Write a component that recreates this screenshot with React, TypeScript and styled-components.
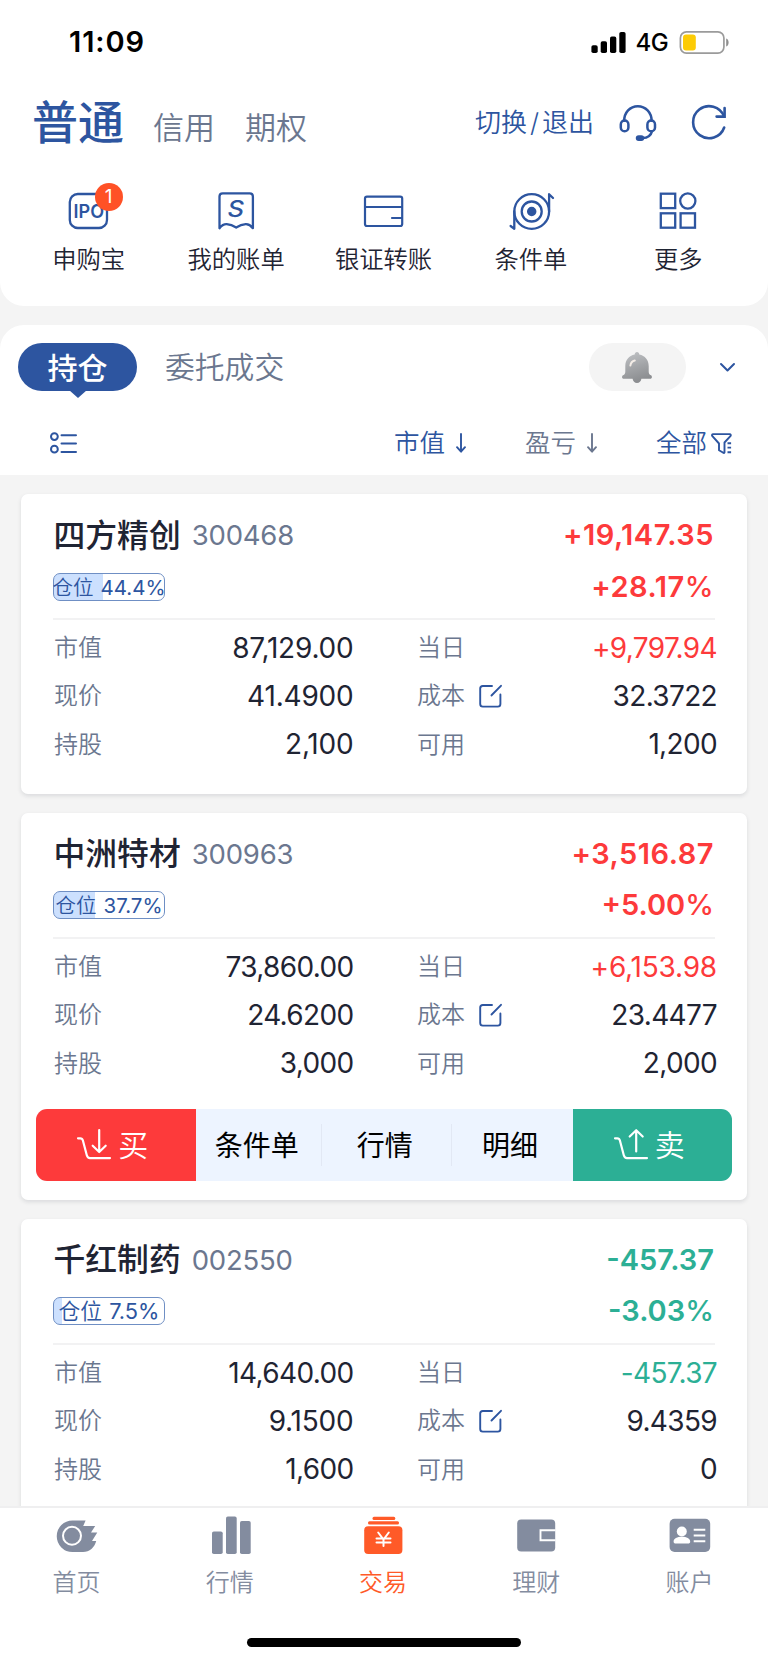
import React from 'react';
import styled, { createGlobalStyle } from 'styled-components';

const c = {
  blue: '#2d55a0',
  gray: '#6b778f',
  ink: '#1f2433',
  red: '#fd3a3b',
  green: '#2caf95',
  orange: '#ff5a28',
  tab: '#838c9f',
  page: '#f4f4f4',
};

const GlobalStyle = createGlobalStyle`
  * { box-sizing: border-box; }
  body { margin: 0; background: ${c.page}; }
`;

const Screen = styled.div`
  width: 768px;
  height: 1663px;
  overflow: hidden;
  display: flex;
  flex-direction: column;
  background: ${c.page};
  color: ${c.ink};
  font-family: Inter, 'Noto Sans CJK SC', sans-serif;
  white-space: nowrap;

  svg { display: block; flex: none; overflow: visible; }
`;

/* ---------- header ---------- */

const Header = styled.header`
  flex: none;
  height: 306px;
  background: #fff;
  border-radius: 0 0 24px 24px;
`;

const StatusBar = styled.div`
  height: 84px;
  padding: 0 39px 0 69px;
  display: flex;
  align-items: center;
  color: #000;
`;

const Clock = styled.span`
  font-size: 29px;
  font-weight: 600;
  line-height: 40px;
  letter-spacing: 0.9px;
  margin: 0 auto 0 0;
`;

const Network = styled.span`
  font-size: 24px;
  font-weight: 500;
  line-height: 40px;
  letter-spacing: -0.6px;
  margin: 2px 12px 0 10px;
`;

const TopRow = styled.div`
  height: 76px;
  padding: 0 41px 0 32px;
  display: flex;
  align-items: center;
`;

const Accounts = styled.nav`
  display: flex;
  align-items: baseline;
  line-height: 60px;
  padding-top: 6px;
  margin-right: auto;
`;

const Account = styled.span<{ $active?: boolean }>`
  font-size: ${(p) => (p.$active ? 46 : 31)}px;
  font-weight: ${(p) => (p.$active ? 500 : 350)};
  color: ${(p) => (p.$active ? c.blue : c.gray)};
  margin-right: ${(p) => (p.$active ? 29 : 30)}px;
`;

const SwitchLink = styled.span`
  font-size: 26px;
  font-weight: 350;
  line-height: 40px;
  color: ${c.blue};
  padding-top: 2px;
  margin-right: 24px;

  i { font-style: normal; margin: 0 3px; }
`;

const HeadsetSlot = styled.span`
  margin-right: 33px;
`;

const QuickGrid = styled.div`
  display: flex;
  padding: 29px 16px 0 15px;
`;

const QuickItem = styled.div`
  flex: 1;
  display: flex;
  flex-direction: column;
  align-items: center;
`;

const QuickIcon = styled.div`
  position: relative;
  width: 44px;
  height: 44px;
`;

const Badge = styled.span`
  position: absolute;
  left: 28px;
  top: -6px;
  width: 28px;
  height: 28px;
  border-radius: 50%;
  background: #ff5126;
  color: #fff;
  font-size: 19px;
  line-height: 28px;
  text-align: center;
`;

const QuickLabel = styled.span`
  margin-top: 8.5px;
  font-size: 24.3px;
  font-weight: 350;
  line-height: 34px;
`;

/* ---------- holdings panel ---------- */

const Panel = styled.section`
  flex: none;
  height: 150px;
  margin-top: 19px;
  padding-top: 18px;
  background: #fff;
  border-radius: 24px 24px 0 0;
`;

const ViewTabs = styled.div`
  display: flex;
  align-items: center;
  height: 48px;
  padding: 0 33px 0 18px;
`;

const ActivePill = styled.span`
  position: relative;
  width: 119px;
  height: 48px;
  border-radius: 24px;
  background: ${c.blue};
  color: #fff;
  font-size: 30px;
  font-weight: 500;
  line-height: 50px;
  text-align: center;

  &::after {
    content: '';
    position: absolute;
    left: 51px;
    top: 47px;
    border: 9px solid transparent;
    border-top: 8.5px solid ${c.blue};
    border-bottom: 0;
  }
`;

const ViewTab = styled.span`
  margin: 0 auto 0 28px;
  padding-top: 1px;
  font-size: 29.8px;
  font-weight: 350;
  line-height: 49px;
  color: ${c.gray};
`;

const BellPill = styled.span`
  width: 97px;
  height: 48px;
  margin-right: 34px;
  padding-right: 1px;
  border-radius: 24px;
  background: ${c.page};
  display: flex;
  align-items: center;
  justify-content: center;
`;

const FilterRow = styled.div`
  display: flex;
  align-items: center;
  height: 66px;
  margin-top: 19px;
  padding: 0 36px 0 50px;
`;

const Filter = styled.span<{ $muted?: boolean; $before: string; $gap: number }>`
  display: flex;
  align-items: center;
  gap: ${(p) => p.$gap}px;
  margin-left: ${(p) => p.$before};
  font-size: 25.5px;
  font-weight: 350;
  line-height: 40px;
  color: ${(p) => (p.$muted ? c.gray : c.blue)};
`;

/* ---------- stock cards ---------- */

const CardList = styled.main`
  flex: 1;
  min-height: 0;
  overflow: hidden;
  padding: 19px 21px 0;
  display: flex;
  flex-direction: column;
  gap: 19px;
`;

const Card = styled.article`
  flex: none;
  background: #fff;
  border-radius: 7px;
  padding: 15px 0 19px;
  box-shadow: 0 2px 4px rgba(30, 40, 60, 0.12);
`;

const CardHead = styled.div`
  display: grid;
  grid-template-columns: 1fr auto;
  grid-template-rows: 52px 51px;
  align-items: center;
  margin: 0 32px 6px;
  padding-right: 1px;
`;

const Title = styled.div`
  display: flex;
  align-items: center;
  gap: 11px;
  padding-left: 0.5px;
`;

const Name = styled.span`
  padding-top: 1px;
  font-size: 31.8px;
  font-weight: 500;
  line-height: 44px;
`;

const Code = styled.span`
  font-size: 27.5px;
  line-height: 44px;
  color: ${c.gray};
  letter-spacing: -0.2px;
`;

const hasInnerOne = (s: string) => /\d[.,]?1/.test(s);

const Gain = styled.span<{ $up: boolean; $wide: boolean }>`
  justify-self: end;
  font-size: 29px;
  font-weight: 600;
  letter-spacing: ${(p) => (p.$wide ? 0.5 : 0)}px;
  line-height: 44px;
  color: ${(p) => (p.$up ? c.red : c.green)};

  small { font-size: inherit; font-weight: 500; }
`;

const Weight = styled.span<{ $share: number }>`
  width: 112px;
  height: 28px;
  border: 1px solid #6f8fc4;
  border-radius: 7px;
  background: linear-gradient(90deg, #cce0fe ${(p) => p.$share}%, #fff ${(p) => p.$share}%);
  color: ${c.blue};
  font-size: ${(p) => (p.$share < 10 ? 21.8 : 20.5)}px;
  font-weight: 350;
  line-height: 27px;
  display: flex;
  justify-content: center;
  gap: 7px;

  b { font-weight: 400; }
`;

const Rule = styled.div`
  height: 2px;
  margin: 0 32px 3.5px;
  background: #f2f2f3;
`;

const Facts = styled.dl`
  display: grid;
  grid-template-columns: 299.5px 300px;
  grid-auto-rows: 48.3px;
  column-gap: 63.5px;
  margin: 0 30px 6.6px 33px;
`;

const Fact = styled.div`
  display: flex;
  align-items: center;
  line-height: 40px;
`;

const Label = styled.dt`
  padding-top: 1px;
  font-size: 24px;
  font-weight: 350;
  color: ${c.gray};
  margin-right: 13.5px;
`;

const Figure = styled.dd<{ $color?: string; $wide: boolean }>`
  margin: 0 0 0 auto;
  font-size: 28px;
  letter-spacing: ${(p) => (p.$wide ? -0.2 : -0.65)}px;
  color: ${(p) => p.$color || c.ink};
`;

const Actions = styled.div`
  display: flex;
  height: 72px;
  margin: 21.5px 15px 0;
  border-radius: 11px;
  overflow: hidden;
  background: #edf4ff;
  color: #000;
`;

const Trade = styled.span<{ $buy?: boolean }>`
  width: 159.5px;
  display: flex;
  align-items: center;
  justify-content: center;
  gap: 7px;
  padding-right: 6px;
  background: ${(p) => (p.$buy ? c.red : c.green)};
  color: #fff;
  font-size: 30px;
  font-weight: 350;
  line-height: 74px;
`;

const Links = styled.div`
  flex: 1;
  display: flex;
  align-items: center;
`;

const ActionLink = styled.span<{ $w: number }>`
  width: ${(p) => p.$w}px;
  height: 42px;
  padding-right: 3px;
  line-height: 44px;
  font-size: 28px;
  font-weight: 400;
  text-align: center;

  & + & { border-left: 1.5px solid #e2e8f4; }
`;

/* ---------- bottom bar ---------- */

const TabBar = styled.footer`
  flex: none;
  height: 157px;
  background: #fff;
  border-top: 2px solid #efeff0;
`;

const TabItems = styled.nav`
  display: flex;
  width: 766px;
`;

const TabItem = styled.span<{ $active?: boolean }>`
  flex: 1;
  display: flex;
  flex-direction: column;
  align-items: center;
  gap: 10px;
  padding-top: 2px;
  font-size: 24px;
  font-weight: 350;
  line-height: 34px;
  color: ${(p) => (p.$active ? c.orange : c.tab)};
`;

const HomeIndicator = styled.div`
  width: 274px;
  height: 9px;
  margin: 38px auto 0;
  border-radius: 5px;
  background: #000;
`;

/* ---------- icons ---------- */

const stroke = { fill: 'none', stroke: 'currentColor', strokeLinecap: 'round', strokeLinejoin: 'round' } as const;

const Signal = () => (
  <svg width="35" height="21" viewBox="0 0 35 21">
    <rect x="0.4" y="13.3" width="6.3" height="7.7" rx="1.8" />
    <rect x="9.7" y="9.3" width="6.3" height="11.7" rx="1.8" />
    <rect x="19" y="4.6" width="6.3" height="16.4" rx="1.8" />
    <rect x="28.3" y="0" width="6.3" height="21" rx="1.8" />
  </svg>
);

const Battery = () => (
  <svg width="49" height="23" viewBox="0 0 49 23">
    <rect x="0.4" y="0.9" width="43.5" height="21.2" rx="6" fill="none" stroke="#9b9b9b" strokeWidth="1.7" />
    <rect x="3" y="3.6" width="12.8" height="15.8" rx="3" fill="#fccb05" />
    <path d="M46.2 7.5c3.2 1 3.2 7 0 8z" fill="#8f8f8f" />
  </svg>
);

const Headset = () => (
  <svg width="40" height="40" viewBox="0 0 40 40" color={c.blue} {...stroke} strokeWidth="2.5">
    <path d="M6.2 18.8C6.2 10.5 12 4.200 19.8 4.200s13.8 6.300 13.8 14.600" />
    <rect x="2.8" y="18.6" width="7.6" height="10.6" rx="3.8" />
    <rect x="29.4" y="18.6" width="7.6" height="10.6" rx="3.8" />
    <path d="M34 29.2c-1 4.2-5 6.6-9.5 6.900" />
    <rect x="19" y="34.4" width="6" height="3.4" rx="1.7" fill="currentColor" />
  </svg>
);

const Refresh = () => (
  <svg width="36" height="36" viewBox="0 0 36 36" color={c.blue} {...stroke} strokeWidth="2.6">
    <path d="M33 12.3A16 16 0 1 0 33.2 23.5" />
    <path d="M33.6 4v8.6h-8" strokeLinejoin="miter" />
  </svg>
);

const IpoIcon = () => (
  <svg width="44" height="44" viewBox="0 0 44 44" color={c.blue}>
    <rect x="2.8" y="5" width="37.2" height="34" rx="8" {...stroke} strokeWidth="2.3" />
    <text x="6.6" y="29" fontSize="19" fontWeight="600" fill="currentColor" textLength="30.5" lengthAdjust="spacingAndGlyphs">IPO</text>
  </svg>
);

const BillIcon = () => (
  <svg width="44" height="44" viewBox="0 0 44 44" color={c.blue}>
    <path d="M5.5 39.2V7.6Q5.5 4.4 8.7 4.4H35.7Q38.9 4.4 38.9 7.6V39.2Q35.6 35 31.7 35.2Q27 35.6 22.2 38.6Q17.4 35.6 12.7 35.2Q8.8 35 5.5 39.2Z" {...stroke} strokeWidth="2.3" />
    <text x="13.6" y="28.4" fontSize="22.5" fontWeight="500" fontStyle="italic" fill="currentColor" textLength="16.5" lengthAdjust="spacingAndGlyphs">S</text>
  </svg>
);

const TransferIcon = () => (
  <svg width="44" height="44" viewBox="0 0 44 44" color={c.blue} {...stroke} strokeWidth="2.2">
    <rect x="3" y="7.6" width="37.2" height="29.4" rx="2" />
    <path d="M3 18H40M30 29h10" />
  </svg>
);

const TargetIcon = () => (
  <svg width="44" height="44" viewBox="0 0 44 44" color={c.blue} {...stroke} strokeWidth="2.3">
    <circle cx="22.7" cy="22.5" r="17.4" />
    <circle cx="22.7" cy="22.5" r="10" />
    <circle cx="22.7" cy="22.5" r="3.6" fill="currentColor" />
    <path d="M40.1 22.5V5.2L44 9M5.3 22.5V39.8L1.6 37" />
  </svg>
);

const MoreIcon = () => (
  <svg width="44" height="44" viewBox="0 0 44 44" color={c.blue} {...stroke} strokeWidth="2.3" strokeLinejoin="miter">
    <rect x="4.8" y="4.7" width="14.4" height="14.4" />
    <circle cx="31.8" cy="12" r="7.6" />
    <rect x="4.8" y="24.3" width="14.4" height="14.4" />
    <rect x="24.6" y="24.3" width="14.4" height="14.4" />
  </svg>
);

const Bell = () => (
  <svg width="30" height="31" viewBox="0 0 30 31">
    <defs>
      <linearGradient id="bellBody" x1="0" y1="0" x2="0.3" y2="1">
        <stop offset="0" stopColor="#c3c5c8" />
        <stop offset="0.55" stopColor="#a3a5a8" />
        <stop offset="1" stopColor="#8c8e91" />
      </linearGradient>
    </defs>
    <path
      d="M15 0c1.400 0 2.200 1 2.300 2.500C23 3.600 26.700 8 26.700 14v5.500c0 2 .7 3.100 1.600 3.400 2.300.6 2.100 3.800-.1 3.800H19.400C19 29.200 17.500 31 15 31s-4-1.800-4.400-4.300H1.800c-2.200 0-2.400-3.200-.1-3.800.9-.3 1.600-1.400 1.600-3.400V14C3.300 8 7 3.600 12.700 2.500 12.800 1 13.600 0 15 0z"
      fill="url(#bellBody)"
    />
    <path d="M8.400 13.500c.3-2.400 2-4.300 4.400-5" fill="none" stroke="#f3ece6" strokeWidth="2" strokeLinecap="round" />
  </svg>
);

const Chevron = () => (
  <svg width="15" height="9" viewBox="0 0 15 9" color={c.blue} {...stroke} strokeWidth="2">
    <path d="M1 1l6.500 6.500L14 1" />
  </svg>
);

const ListIcon = () => (
  <svg width="27" height="22" viewBox="0 0 27 22" color={c.blue} {...stroke} strokeWidth="2">
    <circle cx="4.400" cy="4.600" r="3.400" />
    <circle cx="4.400" cy="17.200" r="3.400" />
    <path d="M11.500 3.200H26M11.500 11.600H26M11.500 20H26" />
  </svg>
);

const DownArrow = () => (
  <svg width="10" height="20" viewBox="0 0 10 20" {...stroke} strokeWidth="1.900">
    <path d="M5 1v17.500M1 14.200l4 4.500 4-4.500" />
  </svg>
);

const Funnel = () => (
  <svg width="21" height="21" viewBox="0 0 21 21" {...stroke} strokeWidth="1.900">
    <path d="M13.500 19.500c-.2.500-.8.600-1.200.3L8 17.200V10.500L1.400 3.200C.6 2.100 1 1.100 2.200 1.100H18.600c1.200 0 1.600 1 .8 2.100L13.500 9.500z" />
    <path d="M16.500 10.200h3.600M16.500 14.600h3.600M16.500 19.200h3.600" strokeLinecap="butt" />
  </svg>
);

const EditIcon = () => (
  <svg width="23" height="24" viewBox="0 0 23 24" color={c.blue} {...stroke} strokeWidth="1.900">
    <path d="M13 2H3.800Q1.200 2 1.200 4.600V20Q1.200 22.600 3.800 22.600H18.800Q21.400 22.600 21.400 20V10.500" />
    <path d="M12.500 11.500L22 1.800" />
  </svg>
);

const TradeIcon = ({ up }: { up?: boolean }) => (
  <svg width="34" height="31" viewBox="0 0 34 31" {...stroke} strokeWidth="2.200">
    <path d="M1 9.300h2.300q2 0 2.600 2.200l3.900 14.800q.8 2.800 3.200 2.800H33" />
    <path d={up ? 'M22.200 22.500V1.500M15.700 7.500l6.500-6.300 6.500 6.300' : 'M22.200 1V22.500M15.700 16.700l6.500 6.300 6.500-6.300'} />
  </svg>
);

const HomeIcon = () => (
  <svg width="44" height="46" viewBox="0 0 44 46">
    <path d="M17.500 10.500H30.600L28.200 16H40.200L36 22.400H42.300L37 31H41.200C39.600 37.500 34.600 42 28 42H17.500A15.750 15.750 0 0 1 17.500 10.500z" fill="currentColor" />
    <circle cx="17" cy="25.800" r="9" fill="none" stroke="#fff" strokeWidth="2" />
  </svg>
);

const MarketIcon = () => (
  <svg width="44" height="46" viewBox="0 0 44 46" fill="currentColor">
    <rect x="4" y="21.500" width="10.700" height="22.500" rx="1.800" />
    <rect x="18" y="6.600" width="10.700" height="37.400" rx="1.800" />
    <rect x="32" y="11" width="10.700" height="33" rx="1.800" />
  </svg>
);

const DealIcon = () => (
  <svg width="44" height="46" viewBox="0 0 44 46" fill="currentColor">
    <rect x="11.500" y="6.800" width="22.800" height="3.100" rx="1.500" />
    <rect x="7" y="11.300" width="31" height="3.300" rx="1.500" />
    <rect x="3.200" y="16.200" width="38.200" height="27.800" rx="4" />
    <path d="M17.200 22.500l5.300 7 5.300-7M22.500 29.500V36M15.500 28.400h14M15.500 32.600h14" fill="none" stroke="#fff" strokeWidth="2" strokeLinecap="round" />
  </svg>
);

const WalletIcon = () => (
  <svg width="44" height="46" viewBox="0 0 44 46">
    <rect x="3.200" y="9.500" width="38" height="32" rx="4" fill="currentColor" />
    <path d="M41.500 20.200H26.500V30.200H41.500" fill="none" stroke="#fff" strokeWidth="1.900" />
  </svg>
);

const UserCardIcon = () => (
  <svg width="44" height="46" viewBox="0 0 44 46">
    <rect x="2.600" y="8.800" width="40.600" height="33.200" rx="5" fill="currentColor" />
    <circle cx="14.800" cy="21.500" r="5" fill="#fff" />
    <path d="M6.600 31.800c0-3.200 3.600-5 8.300-5s8.300 1.800 8.300 5c0 1.200-.8 1.800-2.200 1.800H8.800c-1.400 0-2.200-.6-2.200-1.800z" fill="#fff" />
    <path d="M26.700 19.700h11.600M26.700 25.500h11.600M26.700 31.200h11.600" stroke="#fff" strokeWidth="1.900" />
  </svg>
);

/* ---------- data ---------- */

const quick = [
  { label: '申购宝', icon: <IpoIcon />, badge: '1' },
  { label: '我的账单', icon: <BillIcon /> },
  { label: '银证转账', icon: <TransferIcon /> },
  { label: '条件单', icon: <TargetIcon /> },
  { label: '更多', icon: <MoreIcon /> },
];

type Stock = {
  name: string; code: string; share: number; up: boolean;
  gain: string; rate: string; value: string; today: string;
  price: string; cost: string; held: string; usable: string; open?: boolean;
};

const stocks: Stock[] = [
  { name: '四方精创', code: '300468', share: 44.4, up: true, gain: '+19,147.35', rate: '+28.17', value: '87,129.00', today: '+9,797.94', price: '41.4900', cost: '32.3722', held: '2,100', usable: '1,200' },
  { name: '中洲特材', code: '300963', share: 37.7, up: true, gain: '+3,516.87', rate: '+5.00', value: '73,860.00', today: '+6,153.98', price: '24.6200', cost: '23.4477', held: '3,000', usable: '2,000', open: true },
  { name: '千红制药', code: '002550', share: 7.5, up: false, gain: '-457.37', rate: '-3.03', value: '14,640.00', today: '-457.37', price: '9.1500', cost: '9.4359', held: '1,600', usable: '0' },
];

const tabs = [
  { label: '首页', icon: <HomeIcon /> },
  { label: '行情', icon: <MarketIcon /> },
  { label: '交易', icon: <DealIcon />, active: true },
  { label: '理财', icon: <WalletIcon /> },
  { label: '账户', icon: <UserCardIcon /> },
];

const Value = ({ text, color }: { text: string; color?: string }) => (
  <Figure $color={color} $wide={hasInnerOne(text)}>{text}</Figure>
);

const StockCard = ({ s }: { s: Stock }) => (
  <Card>
    <CardHead>
      <Title><Name>{s.name}</Name><Code>{s.code}</Code></Title>
      <Gain $up={s.up} $wide={hasInnerOne(s.gain)}>{s.gain}</Gain>
      <Weight $share={s.share}>仓位<b>{s.share}%</b></Weight>
      <Gain $up={s.up} $wide={hasInnerOne(s.rate)}>{s.rate}<small>%</small></Gain>
    </CardHead>
    <Rule />
    <Facts>
      <Fact><Label>市值</Label><Value text={s.value} /></Fact>
      <Fact><Label>当日</Label><Value text={s.today} color={s.up ? c.red : c.green} /></Fact>
      <Fact><Label>现价</Label><Value text={s.price} /></Fact>
      <Fact><Label>成本</Label><EditIcon /><Value text={s.cost} /></Fact>
      <Fact><Label>持股</Label><Value text={s.held} /></Fact>
      <Fact><Label>可用</Label><Value text={s.usable} /></Fact>
    </Facts>
    {s.open && (
      <Actions>
        <Trade $buy><TradeIcon />买</Trade>
        <Links>
          <ActionLink $w={125.5}>条件单</ActionLink>
          <ActionLink $w={129.5}>行情</ActionLink>
          <ActionLink $w={121}>明细</ActionLink>
        </Links>
        <Trade><TradeIcon up />卖</Trade>
      </Actions>
    )}
  </Card>
);

export default function App() {
  return (
    <Screen>
      <GlobalStyle />
      <Header>
        <StatusBar>
          <Clock>11:09</Clock>
          <Signal />
          <Network>4G</Network>
          <Battery />
        </StatusBar>
        <TopRow>
          <Accounts>
            <Account $active>普通</Account>
            <Account>信用</Account>
            <Account>期权</Account>
          </Accounts>
          <SwitchLink>切换<i>/</i>退出</SwitchLink>
          <HeadsetSlot><Headset /></HeadsetSlot>
          <Refresh />
        </TopRow>
        <QuickGrid>
          {quick.map((q) => (
            <QuickItem key={q.label}>
              <QuickIcon>{q.icon}{q.badge && <Badge>{q.badge}</Badge>}</QuickIcon>
              <QuickLabel>{q.label}</QuickLabel>
            </QuickItem>
          ))}
        </QuickGrid>
      </Header>
      <Panel>
        <ViewTabs>
          <ActivePill>持仓</ActivePill>
          <ViewTab>委托成交</ViewTab>
          <BellPill><Bell /></BellPill>
          <Chevron />
        </ViewTabs>
        <FilterRow>
          <ListIcon />
          <Filter $before="auto" $gap={11}>市值<DownArrow /></Filter>
          <Filter $muted $before="59px" $gap={11}>盈亏<DownArrow /></Filter>
          <Filter $before="59px" $gap={4}>全部<Funnel /></Filter>
        </FilterRow>
      </Panel>
      <CardList>
        {stocks.map((s) => <StockCard key={s.code} s={s} />)}
      </CardList>
      <TabBar>
        <TabItems>
          {tabs.map((t) => (
            <TabItem key={t.label} $active={t.active}>{t.icon}{t.label}</TabItem>
          ))}
        </TabItems>
        <HomeIndicator />
      </TabBar>
    </Screen>
  );
}
